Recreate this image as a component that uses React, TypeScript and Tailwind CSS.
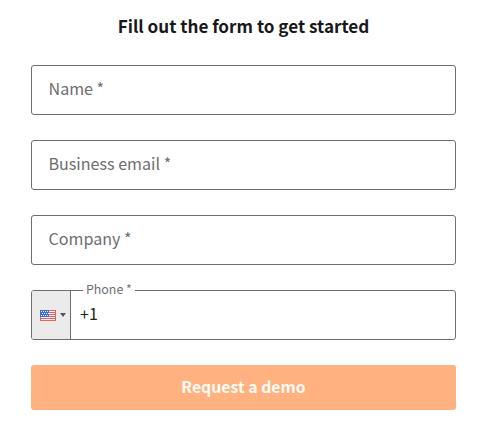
import { useState } from 'react';

interface TextFieldProps {
  name: string;
  label: string;
  type?: string;
}

function TextField({ name, label, type = 'text' }: TextFieldProps) {
  return (
    <input
      type={type}
      name={name}
      placeholder={label}
      aria-label={label}
      required
      className="block h-[50px] w-full rounded-[3px] border border-[#6e6d70] bg-white pl-[16.5px] pr-4 pb-[5px] text-[16.1px] leading-[26px] text-[#1f2022] placeholder:text-[#6e6d70] placeholder:opacity-100 focus:outline-none"
    />
  );
}

function UsFlag() {
  return (
    <svg width="16" height="11" viewBox="0 0 16 11" shapeRendering="crispEdges" aria-hidden="true">
      <rect width="16" height="11" fill="#fbeeee" />
      {[0, 2, 4, 6, 8, 10].map((y) => (
        <rect key={y} y={y} width="16" height="1" fill="#e0655f" />
      ))}
      <rect y="7" width="1" height="4" fill="#e0655f" />
      <rect x="15" width="1" height="11" fill="#e0655f" />
      <rect width="9" height="7" fill="#3d6fd0" />
      {[1, 3, 5].map((y) =>
        [1, 3, 5, 7].map((x) => (
          <rect key={`${x}-${y}`} x={y === 3 ? x + 1 : x} y={y} width="1" height="1" fill="#e6eefc" />
        )),
      )}
    </svg>
  );
}

export default function App() {
  const [phone, setPhone] = useState('+1');

  return (
    <div className="min-h-[425px] bg-white pl-[31px] pr-8 pt-[13px] font-['Noto_Sans_CJK_SC','Noto_Sans',sans-serif]">
      <h1 className="text-center text-[17.1px] font-bold leading-[26px] text-[#17181a]">
        Fill out the form to get started
      </h1>

      <form onSubmit={(e) => e.preventDefault()} className="mt-[26px] flex flex-col gap-[25px]">
        <TextField name="name" label="Name *" />
        <TextField name="email" label="Business email *" />
        <TextField name="company" label="Company *" />

        <div className="relative flex h-[50px] rounded-[3px] border border-[#6e6d70]">
          <button
            type="button"
            aria-label="Country"
            className="flex w-[39px] items-center rounded-l-[2px] border-r border-[#6e6d70] bg-[#ebebeb] pl-2"
          >
            <UsFlag />
            <svg width="6" height="4" viewBox="0 0 6 4" className="ml-1" aria-hidden="true">
              <path d="M0 0h6L3 4z" fill="#555" />
            </svg>
          </button>
          <input
            type="tel"
            id="phone"
            value={phone}
            onChange={(e) => setPhone(e.target.value)}
            className="min-w-0 flex-1 bg-transparent pb-[4px] pl-[9px] text-[16px] leading-[26px] text-[#1f2022] focus:outline-none"
          />
          {/* Label sits over the top border */}
          <label
            htmlFor="phone"
            className="absolute -top-[11px] left-[51px] bg-white px-[3px] text-[12.4px] leading-[18px] text-[#6e6d70]"
          >
            Phone *
          </label>
        </div>

        <button
          type="submit"
          className="h-[45px] rounded-[3px] bg-[#ffb27f] pb-[2px] text-[15.8px] font-bold leading-[26px] text-[#fffaf4]"
        >
          Request a demo
        </button>
      </form>
    </div>
  );
}
